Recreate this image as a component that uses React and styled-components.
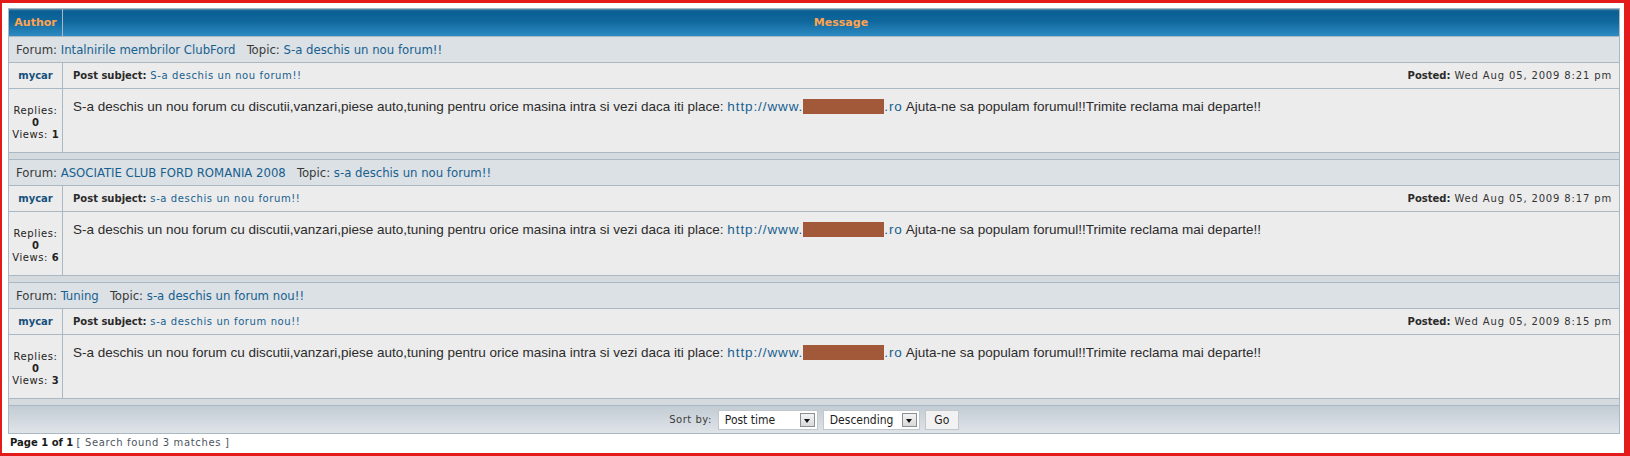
import React from 'react';
import styled, { createGlobalStyle } from 'styled-components';

const GlobalStyle = createGlobalStyle`
  html, body {
    margin: 0;
    padding: 0;
    background: #ffffff;
  }
  body {
    font-family: "DejaVu Sans", Verdana, sans-serif;
  }
`;

const posts = [
  {
    forum: 'Intalnirile membrilor ClubFord',
    topic: 'S-a deschis un nou forum!!',
    posted: 'Wed Aug 05, 2009 8:21 pm',
    replies: 0,
    views: 1,
  },
  {
    forum: 'ASOCIATIE CLUB FORD ROMANIA 2008',
    topic: 's-a deschis un nou forum!!',
    posted: 'Wed Aug 05, 2009 8:17 pm',
    replies: 0,
    views: 6,
  },
  {
    forum: 'Tuning',
    topic: 's-a deschis un forum nou!!',
    posted: 'Wed Aug 05, 2009 8:15 pm',
    replies: 0,
    views: 3,
  },
];

const Frame = styled.div`
  box-sizing: border-box;
  height: 456px;
  border-style: solid;
  border-color: #e31b1b;
  border-width: 3px 6px 3px 2px;
  padding: 5px 4px 0 6px;
  display: flex;
  flex-direction: column;
`;

const Board = styled.div`
  display: grid;
  grid-template-columns: 53px 1fr;
  gap: 1px;
  padding: 1px;
  background: #a9b8c2;
`;

const HeadCell = styled.div`
  height: 27px;
  display: flex;
  align-items: center;
  justify-content: center;
  color: #ffa34f;
  font-weight: bold;
  font-size: 11px;
  background: linear-gradient(to bottom, #5b8fb0 0, #0a5f93 2px, #0f679c 45%, #2c8bc2 100%);
`;

const FullRow = styled.div`
  grid-column: 1 / -1;
`;

const ForumRow = styled(FullRow)`
  height: 25px;
  display: flex;
  align-items: center;
  padding-left: 7px;
  background: #dce1e5;
  color: #3a3a3a;
  font-family: "DejaVu Sans Condensed", "DejaVu Sans", sans-serif;
  font-size: 13px;
  white-space: pre;
`;

const Link = styled.a`
  color: #16608f;
  text-decoration: none;
`;

const UrlLink = styled(Link)`
  letter-spacing: 0.9px;
`;

const AuthorCell = styled.div`
  height: 25px;
  display: flex;
  align-items: center;
  justify-content: center;
  background: #ececec;
  color: #17507c;
  font-weight: bold;
  font-size: 10px;
`;

const SubjectCell = styled.div`
  height: 25px;
  display: flex;
  align-items: center;
  justify-content: space-between;
  padding: 0 7px 0 10px;
  background: #ececec;
  font-size: 10px;
  letter-spacing: 0.6px;
  color: #333333;

  b {
    color: #2a2a2a;
    letter-spacing: 0;
  }
`;

const PostedAt = styled.div`
  letter-spacing: 0.85px;
`;

const StatsCell = styled.div`
  height: 63px;
  box-sizing: border-box;
  padding-top: 16px;
  background: #ececec;
  text-align: center;
  font-size: 10px;
  line-height: 12px;
  letter-spacing: 0.6px;
  color: #222222;

  b {
    letter-spacing: 0;
  }
`;

const BodyCell = styled.div`
  height: 63px;
  box-sizing: border-box;
  padding: 10px 10px 0;
  background: #ececec;
  font-family: "Liberation Sans", Arial, sans-serif;
  font-size: 13.5px;
  line-height: 16px;
  color: #2b2b2b;
  white-space: nowrap;
`;

const Redacted = styled.span`
  display: inline-block;
  width: 81px;
  height: 15px;
  vertical-align: -3px;
  background: #a2593a;
`;

const Spacer = styled(FullRow)`
  height: 6px;
  background: #d4dade;
`;

const SortBar = styled(FullRow)`
  height: 27px;
  display: flex;
  align-items: center;
  justify-content: center;
  gap: 5px;
  background: linear-gradient(to bottom, #c3ccd4 0, #d2d9df 55%, #dfe4e8 100%);
  font-size: 10px;
  color: #3c3c3c;
`;

const Label = styled.span`
  margin-right: 1px;
  letter-spacing: 0.5px;
`;

const Select = styled.div`
  box-sizing: border-box;
  width: ${(p) => p.$width}px;
  height: 20px;
  display: flex;
  align-items: center;
  justify-content: space-between;
  padding: 0 2px 0 6px;
  background: #ffffff;
  border: 1px solid #c2c7cc;
  font-family: "DejaVu Sans Condensed", "DejaVu Sans", sans-serif;
  font-size: 12px;
  color: #1e1e1e;
`;

const Arrow = styled.span`
  box-sizing: border-box;
  width: 15px;
  height: 14px;
  display: flex;
  align-items: center;
  justify-content: center;
  border: 1px solid #8a8f94;
  background: linear-gradient(#f4f4f4, #d9d9d9);

  &::after {
    content: '';
    border-left: 3.5px solid transparent;
    border-right: 3.5px solid transparent;
    border-top: 4px solid #111111;
    margin-top: 2px;
  }
`;

const Button = styled.div`
  box-sizing: border-box;
  width: 34px;
  height: 20px;
  display: flex;
  align-items: center;
  justify-content: center;
  background: #f2f2f2;
  border: 1px solid #c2c7cc;
  font-family: "DejaVu Sans Condensed", "DejaVu Sans", sans-serif;
  font-size: 12px;
  color: #1e1e1e;
`;

const Footer = styled.div`
  margin-top: 3px;
  padding-left: 2px;
  font-size: 10px;
  color: #1a1a1a;

  span {
    color: #4d5660;
    letter-spacing: 0.65px;
  }
`;

function Post({ post }) {
  return (
    <>
      <ForumRow>
        <span>
          Forum: <Link href="#">{post.forum}</Link>
          {'   '}Topic: <Link href="#">{post.topic}</Link>
        </span>
      </ForumRow>
      <AuthorCell>mycar</AuthorCell>
      <SubjectCell>
        <div>
          <b>Post subject:</b> <Link href="#">{post.topic}</Link>
        </div>
        <PostedAt>
          <b>Posted:</b> {post.posted}
        </PostedAt>
      </SubjectCell>
      <StatsCell>
        Replies:
        <br />
        <b>{post.replies}</b>
        <br />
        Views: <b>{post.views}</b>
      </StatsCell>
      <BodyCell>
        S-a deschis un nou forum cu discutii,vanzari,piese auto,tuning pentru orice masina intra si vezi daca iti
        place: <UrlLink href="#">http://www.<Redacted />.ro</UrlLink> Ajuta-ne sa populam forumul!!Trimite reclama
        mai departe!!
      </BodyCell>
      <Spacer />
    </>
  );
}

export default function App() {
  return (
    <>
      <GlobalStyle />
      <Frame>
        <Board>
          <HeadCell>Author</HeadCell>
          <HeadCell>Message</HeadCell>
          {posts.map((post, i) => (
            <Post key={i} post={post} />
          ))}
          <SortBar>
            <Label>Sort by:</Label>
            <Select $width={100}>
              Post time
              <Arrow />
            </Select>
            <Select $width={97}>
              Descending
              <Arrow />
            </Select>
            <Button>Go</Button>
          </SortBar>
        </Board>
        <Footer>
          <b>Page 1 of 1</b> <span>[ Search found 3 matches ]</span>
        </Footer>
      </Frame>
    </>
  );
}
